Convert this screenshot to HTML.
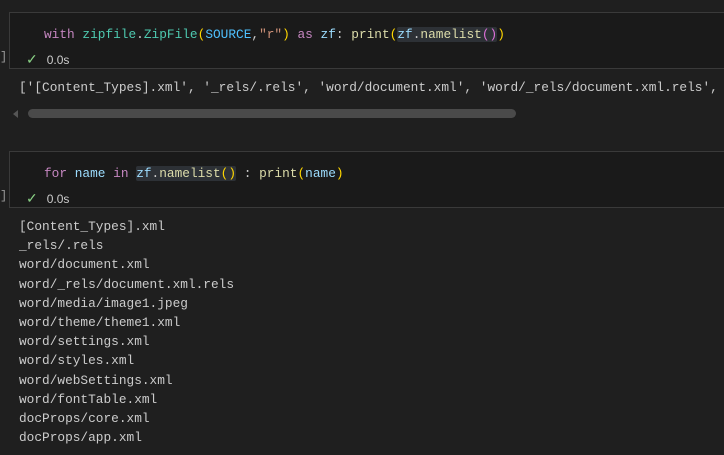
<html><head><style>
body{margin:0;width:724px;height:455px;background:#1f1f1f;overflow:hidden;position:relative;font-family:"Liberation Mono",monospace;}
.cell{position:absolute;left:9px;width:730px;height:55px;border:1px solid #3a3a3a;background:#1a1a1a;}
.code{position:absolute;left:44px;font-size:12.8px;color:#cccccc;white-space:pre;}
.st{position:absolute;left:26px;font-family:"Liberation Sans",sans-serif;font-size:12px;color:#cccccc;}
.st b{color:#89d185;font-weight:normal;margin-right:9px;font-size:14px}
.br{position:absolute;left:0;font-size:12px;color:#999}
.out{position:absolute;left:19px;font-size:12.8px;color:#cccccc;white-space:pre;line-height:19.2px}
.k{color:#c586c0}.t{color:#4ec9b0}.y{color:#ffd700}.v{color:#4fc1ff}.s{color:#ce9178}.f{color:#dcdcaa}.n{color:#9cdcfe}.p{color:#da70d6}
.hl{background:#2d3136;border-radius:2px}
</style></head><body>
<div class="cell" style="top:12px"></div>
<div class="code" style="top:27px"><span class="k">with</span> <span class="t">zipfile</span>.<span class="t">ZipFile</span><span class="y">(</span><span class="v">SOURCE</span>,<span class="s">"r"</span><span class="y">)</span> <span class="k">as</span> <span class="n">zf</span>: <span class="f">print</span><span class="y">(</span><span class="hl"><span class="n">zf</span>.<span class="f">namelist</span><span class="p">()</span></span><span class="y">)</span></div>
<div class="st" style="top:51px"><b>✓</b>0.0s</div>
<div class="br" style="top:50px">]</div>
<div class="out" style="top:78px">['[Content_Types].xml', '_rels/.rels', 'word/document.xml', 'word/_rels/document.xml.rels',</div>
<div style="position:absolute;left:13px;top:110px;width:0;height:0;border-top:4px solid transparent;border-bottom:4px solid transparent;border-right:5px solid #555"></div>
<div style="position:absolute;left:28px;top:109px;width:488px;height:9px;border-radius:5px;background:#4a4a4a"></div>
<div class="cell" style="top:151px"></div>
<div class="code" style="top:166px"><span class="k">for</span> <span class="n">name</span> <span class="k">in</span> <span class="hl"><span class="n">zf</span>.<span class="f">namelist</span><span class="y">()</span></span> : <span class="f">print</span><span class="y">(</span><span class="n">name</span><span class="y">)</span></div>
<div class="st" style="top:190px"><b>✓</b>0.0s</div>
<div class="br" style="top:189px">]</div>
<div class="out" style="top:217px">[Content_Types].xml
_rels/.rels
word/document.xml
word/_rels/document.xml.rels
word/media/image1.jpeg
word/theme/theme1.xml
word/settings.xml
word/styles.xml
word/webSettings.xml
word/fontTable.xml
docProps/core.xml
docProps/app.xml</div>
</body></html>
